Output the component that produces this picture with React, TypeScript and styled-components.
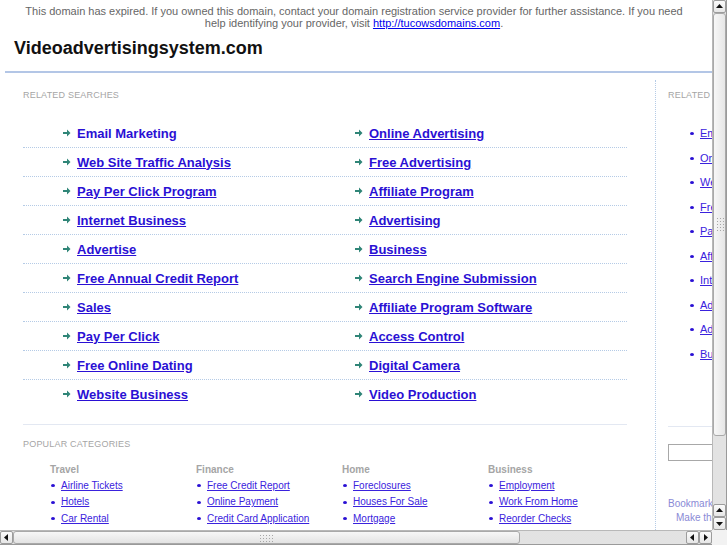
import React from 'react';
import styled, { createGlobalStyle } from 'styled-components';

const GlobalStyle = createGlobalStyle`
  html, body {
    margin: 0;
    padding: 0;
    background: #fff;
    overflow: hidden;
  }
  body {
    font-family: "Liberation Sans", Arial, Helvetica, sans-serif;
  }
`;

const searches = [
  ['Email Marketing', 'Online Advertising'],
  ['Web Site Traffic Analysis', 'Free Advertising'],
  ['Pay Per Click Program', 'Affiliate Program'],
  ['Internet Business', 'Advertising'],
  ['Advertise', 'Business'],
  ['Free Annual Credit Report', 'Search Engine Submission'],
  ['Sales', 'Affiliate Program Software'],
  ['Pay Per Click', 'Access Control'],
  ['Free Online Dating', 'Digital Camera'],
  ['Website Business', 'Video Production'],
];

const categories = [
  { title: 'Travel', items: ['Airline Tickets', 'Hotels', 'Car Rental'] },
  { title: 'Finance', items: ['Free Credit Report', 'Online Payment', 'Credit Card Application'] },
  { title: 'Home', items: ['Foreclosures', 'Houses For Sale', 'Mortgage'] },
  { title: 'Business', items: ['Employment', 'Work From Home', 'Reorder Checks'] },
];

const sideLinks = [
  'Email Marketing',
  'Online Advertising',
  'Web Site Traffic Analysis',
  'Free Advertising',
  'Pay Per Click Program',
  'Affiliate Program',
  'Internet Business',
  'Advertising',
  'Advertise',
  'Business',
];

const Arrow = () => (
  <ArrowSvg viewBox="0 0 8 8" width="8" height="8">
    <path d="M0 3h4V0.5L7.5 4 4 7.5V5H0z" fill="#2f8577" />
  </ArrowSvg>
);

const Tri = ({ dir }: { dir: 'up' | 'down' | 'left' | 'right' }) => {
  const pts = {
    up: '1,6 4.5,2 8,6',
    down: '1,3 4.5,7 8,3',
    left: '6,1 2,4.5 6,8',
    right: '3,1 7,4.5 3,8',
  }[dir];
  return (
    <svg viewBox="0 0 9 9" width="9" height="9">
      <polygon points={pts} fill="#111" />
    </svg>
  );
};

export default function App() {
  return (
    <Frame>
      <GlobalStyle />
      <Viewport>
        <Page>
          <Notice>
            This domain has expired. If you owned this domain, contact your domain registration service
            provider for further assistance. If you need help identifying your provider, visit{' '}
            <NoticeLink href="#">http://tucowsdomains.com</NoticeLink>.
          </Notice>
          <Title>Videoadvertisingsystem.com</Title>
          <Wrapper>
            <Main>
              <Heading>Related Searches</Heading>
              <SearchList>
                {searches.map((pair, i) => (
                  <SearchRow key={i} last={i === searches.length - 1}>
                    {pair.map((label, j) => (
                      <SearchItem key={label}>
                        <Arrow />
                        <SearchLink href="#" plain={i === 0 && j === 0}>
                          {label}
                        </SearchLink>
                      </SearchItem>
                    ))}
                  </SearchRow>
                ))}
              </SearchList>
              <Heading>Popular Categories</Heading>
              <CategoryGrid>
                {categories.map((c) => (
                  <Category key={c.title}>
                    <CategoryTitle>{c.title}</CategoryTitle>
                    {c.items.map((item) => (
                      <CategoryItem key={item}>
                        <Dot />
                        <CategoryLink href="#">{item}</CategoryLink>
                      </CategoryItem>
                    ))}
                  </Category>
                ))}
              </CategoryGrid>
            </Main>
            <Side>
              <SideHeading>Related Searches</SideHeading>
              <SideList>
                {sideLinks.map((s) => (
                  <SideItem key={s}>
                    <Dot />
                    <SideLink href="#">{s}</SideLink>
                  </SideItem>
                ))}
              </SideList>
              <SideRule />
              <SearchInput type="text" />
              <Bookmark>
                <span>Bookmark this page</span>
                <MakeHome>Make this your homepage</MakeHome>
              </Bookmark>
            </Side>
          </Wrapper>
        </Page>
      </Viewport>

      <VBar>
        <StepButton><Tri dir="up" /></StepButton>
        <VThumb><Grip vertical /></VThumb>
        <Trough />
        <StepButton><Tri dir="up" /></StepButton>
        <StepButton><Tri dir="down" /></StepButton>
      </VBar>
      <HBar>
        <StepButton><Tri dir="left" /></StepButton>
        <HThumb><Grip /></HThumb>
        <Trough />
        <StepButton><Tri dir="left" /></StepButton>
        <StepButton><Tri dir="right" /></StepButton>
      </HBar>
      <Corner />
    </Frame>
  );
}

/* window frame with scrollbars */

const Frame = styled.div`
  width: 727px;
  height: 545px;
  display: grid;
  grid-template-columns: 712px 15px;
  grid-template-rows: 530px 15px;
  overflow: hidden;
`;

const Viewport = styled.div`
  overflow: hidden;
`;

const VBar = styled.div`
  display: flex;
  flex-direction: column;
  background: #e2e2e2;
  border-left: 1px solid #b8b8b8;
  border-right: 1px solid #9a9a9a;
  box-sizing: border-box;
`;

const HBar = styled.div`
  display: flex;
  background: #e2e2e2;
  border-top: 1px solid #b8b8b8;
  border-bottom: 1px solid #9a9a9a;
  box-sizing: border-box;
`;

const Corner = styled.div`
  background: #f2f2f2;
`;

const StepButton = styled.div`
  flex: 0 0 13px;
  width: 13px;
  height: 13px;
  box-sizing: border-box;
  display: flex;
  align-items: center;
  justify-content: center;
  background: linear-gradient(#fbfbfb, #e6e6e6);
  border: 1px solid #9c9c9c;
  border-radius: 2px;
`;

const Trough = styled.div`
  flex: 1;
  background-color: #d9d9d9;
  background-image: radial-gradient(#ececec 0.6px, transparent 0.8px);
  background-size: 2px 2px;
`;

const VThumb = styled.div`
  flex: 0 0 423px;
  display: flex;
  align-items: center;
  justify-content: center;
  background: linear-gradient(90deg, #f7f7f7, #e6e6e6);
  border: 1px solid #a9a9a9;
  border-radius: 3px;
  box-sizing: border-box;
`;

const HThumb = styled.div`
  flex: 0 0 507px;
  display: flex;
  align-items: center;
  justify-content: center;
  background: linear-gradient(#f7f7f7, #e3e3e3);
  border: 1px solid #a9a9a9;
  border-radius: 3px;
  box-sizing: border-box;
`;

const Grip = styled.div<{ vertical?: boolean }>`
  width: ${(p) => (p.vertical ? '8px' : '16px')};
  height: ${(p) => (p.vertical ? '16px' : '8px')};
  background-image: radial-gradient(#a6a6a6 0.7px, transparent 1px);
  background-size: 3px 3px;
`;

/* page */

const Page = styled.div`
  width: 980px;
  color: #000;
`;

const Notice = styled.div`
  width: 670px;
  margin-left: 19px;
  padding-top: 5px;
  text-align: center;
  font-size: 11px;
  line-height: 12px;
  color: #666;
`;

const NoticeLink = styled.a`
  color: #0000ee;
  text-decoration: underline;
`;

const Title = styled.h1`
  margin: 8px 0 0 14px;
  font-size: 18px;
  line-height: 22px;
  font-weight: bold;
  color: #111;
`;

const Wrapper = styled.div`
  margin: 12px 0 0 5px;
  padding-top: 7px;
  border-top: 2px solid #b3c6e6;
  display: flex;
  align-items: flex-start;
`;

const Main = styled.div`
  width: 650px;
  box-sizing: border-box;
  padding: 10px 28px 0 18px;
`;

const Heading = styled.div`
  font-size: 9px;
  line-height: 11px;
  color: #a5a5a5;
  text-transform: uppercase;
  letter-spacing: 0.2px;
`;

const SearchList = styled.div`
  margin: 18px 0 14px;
  padding-bottom: 16px;
  border-bottom: 1px solid #e3e8f2;
`;

const SearchRow = styled.div<{ last?: boolean }>`
  display: grid;
  grid-template-columns: 292px 312px;
  height: 28px;
  border-bottom: 1px ${(p) => (p.last ? 'none' : 'dotted')} #b5cbe6;
`;

const SearchItem = styled.div`
  display: flex;
  align-items: center;
  padding-left: 40px;
`;

const ArrowSvg = styled.svg`
  flex: 0 0 8px;
  margin-right: 6px;
`;

const SearchLink = styled.a<{ plain?: boolean }>`
  font-size: 13px;
  font-weight: bold;
  color: #2a10d4;
  text-decoration: ${(p) => (p.plain ? 'none' : 'underline')};
`;

const CategoryGrid = styled.div`
  display: grid;
  grid-template-columns: repeat(4, 146px);
  padding: 14px 0 0 27px;
`;

const Category = styled.div`
  display: flex;
  flex-direction: column;
`;

const CategoryTitle = styled.div`
  font-size: 10px;
  line-height: 12px;
  font-weight: bold;
  color: #a5a5a5;
  margin-bottom: 1px;
`;

const CategoryItem = styled.div`
  display: flex;
  align-items: center;
  height: 16.5px;
`;

const Dot = styled.span`
  flex: 0 0 4px;
  width: 4px;
  height: 3px;
  border-radius: 50%;
  background: #2a10d4;
  margin: 1px 6px 0 1px;
`;

const CategoryLink = styled.a`
  font-size: 10px;
  color: #3a22dd;
  text-decoration: underline;
  white-space: nowrap;
`;

const Side = styled.div`
  width: 200px;
  min-height: 460px;
  box-sizing: border-box;
  padding: 10px 12px 0 12px;
  border-left: 1px dotted #b5cbe6;
`;

const SideHeading = styled(Heading)`
  white-space: nowrap;
`;

const SideList = styled.div`
  margin-top: 20px;
  padding-left: 21px;
`;

const SideItem = styled.div`
  display: flex;
  align-items: center;
  height: 24.5px;
`;

const SideLink = styled.a`
  font-size: 11px;
  color: #3a22dd;
  text-decoration: underline;
  white-space: nowrap;
`;

const SideRule = styled.div`
  margin-top: 60px;
  border-top: 1px solid #e3e8f2;
`;

const SearchInput = styled.input`
  display: block;
  margin-top: 17px;
  width: 150px;
  height: 17px;
  box-sizing: border-box;
  border: 1px solid #a8a8a8;
  padding: 0 3px;
`;

const Bookmark = styled.div`
  margin-top: 36px;
  display: flex;
  flex-direction: column;
  font-size: 10px;
  line-height: 14px;
  color: #8a8ad6;
  white-space: nowrap;
`;

const MakeHome = styled.span`
  padding-left: 8px;
`;
